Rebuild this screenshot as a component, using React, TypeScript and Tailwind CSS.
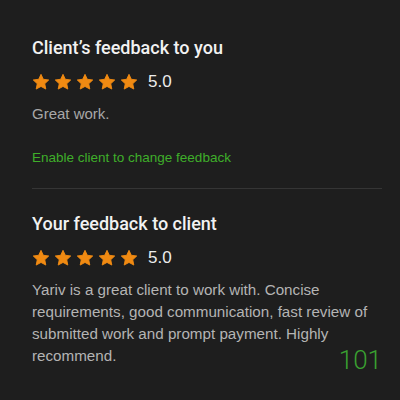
const star = (
  <svg viewBox="0 0 24 24" className="h-[18px] w-[18px]" fill="#f08a12">
    <path d="M12 1.8l3.1 6.6 7.2.9-5.3 5 1.4 7.1L12 17.9l-6.4 3.5 1.4-7.1-5.3-5 7.2-.9z" strokeLinejoin="round" stroke="#f08a12" strokeWidth="1.2" />
  </svg>
)

function Stars({ value }: { value: string }) {
  return (
    <div className="flex items-center">
      <div className="flex gap-[4px]">
        {[0, 1, 2, 3, 4].map((i) => (
          <span key={i}>{star}</span>
        ))}
      </div>
      <span className="ml-[10px] text-[17px] text-[#ececec]">{value}</span>
    </div>
  )
}

function Title({ children, className = '' }: { children: React.ReactNode; className?: string }) {
  return (
    <h2
      className={`text-[18px] leading-6 font-medium text-[#f2f2f2] ${className}`}
      style={{ fontFamily: 'Roboto, "Liberation Sans", sans-serif' }}
    >
      {children}
    </h2>
  )
}

export default function App() {
  return (
    <div
      className="h-[400px] w-[400px] bg-[#1e1e1e] pt-[36px] pr-[18px] pl-8"
      style={{ fontFamily: '"Liberation Sans", Arial, sans-serif' }}
    >
      <Title>Client’s feedback to you</Title>
      <div className="mt-[9px]">
        <Stars value="5.0" />
      </div>
      <p className="mt-[8px] text-[15px] text-[#a8a8a8]">Great work.</p>
      <button className="mt-[23px] block text-[13.5px] text-[#3fae2a]">
        Enable client to change feedback
      </button>
      <div className="mt-[20px] h-px bg-[#353535]" />

      <Title className="mt-[23px]">Your feedback to client</Title>
      <div className="mt-[9px]">
        <Stars value="5.0" />
      </div>
      <div className="relative">
        <p className="mt-[8px] text-[15.2px] leading-[22px] text-[#b4b4b4]">
          Yariv is a great client to work with. Concise requirements, good communication, fast review of
          submitted work and prompt payment. Highly recommend.
        </p>
        <span
          className="absolute right-0 bottom-[-3px] text-[26px] leading-[20px] font-light text-[#3aa131]"
          style={{ fontFamily: 'Roboto, sans-serif' }}
        >
          101
        </span>
      </div>
    </div>
  )
}
